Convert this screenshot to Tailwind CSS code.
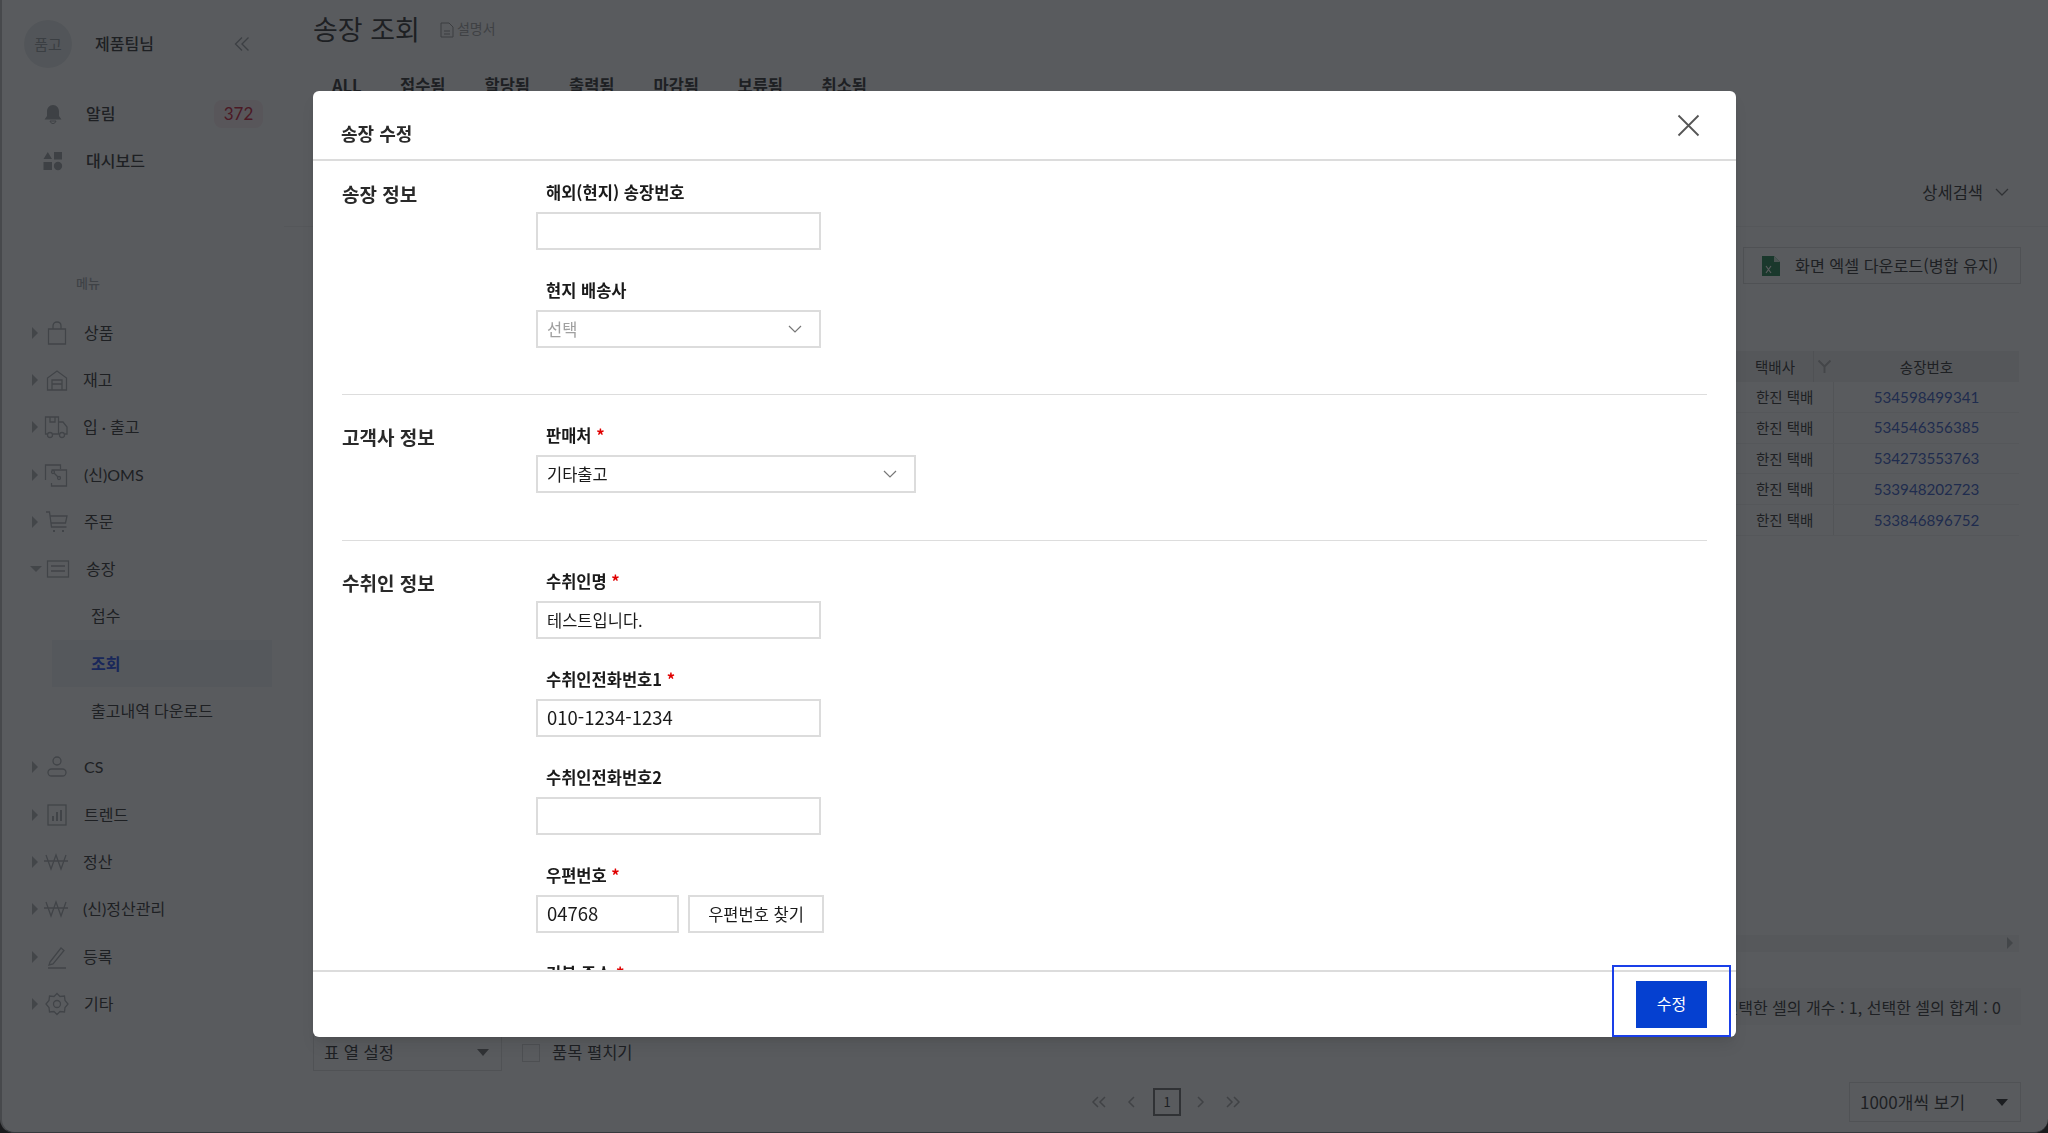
<!DOCTYPE html>
<html lang="ko">
<head>
    <meta charset="UTF-8" />
    <meta name="viewport" content="width=device-width, initial-scale=1.0" />
    <title>송장 조회</title>
    <script src="https://cdn.jsdelivr.net/npm/@tailwindcss/browser@4"></script>
</head>
<body class="h-[1133px] w-[2048px] overflow-hidden bg-[#2e2b26] font-['Noto_Sans_CJK_KR',sans-serif] text-[#3a3a3a]">
<!-- page underneath the dialog -->
<div class="flex h-[1133px] w-[2048px] overflow-hidden rounded-b-[14px] border-b border-l-2 border-b-[#8a8c90] border-l-[#c4c4c4] bg-white">
    <!-- sidebar -->
    <aside class="w-[282px] shrink-0 font-['Lato','Noto_Sans_CJK_KR',sans-serif]">
        <div class="flex h-[88px] items-center pl-[22px]">
            <div class="flex h-[48px] w-[48px] items-center justify-center rounded-full bg-[#e8eced] text-[15px] text-[#9aa0a4]">품고</div>
            <span class="ml-[23px] text-[16px] font-medium">제품팀님</span>
            <svg class="ml-[80px]" width="16" height="16" viewBox="0 0 16 16" fill="none" stroke="#a0a4a8" stroke-width="1.4"><path d="M8 1.5 1.5 8 8 14.5M14.5 1.5 8 8l6.500 6.500"/></svg>
        </div>
        <div class="mt-[2px] flex h-[47px] items-center pl-[41px]">
            <svg width="20" height="20" viewBox="0 0 20 20" fill="#a4a7aa"><path d="M10 1c3.800 0 6 3 6 6.500V12l2.500 3.500h-17L4 12V7.500C4 4 6.200 1 10 1Z"/><path d="M7 17h6c-.4 1.500-1.500 2.500-3 2.500S7.400 18.500 7 17Z" fill="none" stroke="#a4a7aa"/></svg>
            <span class="ml-[23px] w-[90px] text-[16px] font-medium">알림</span>
            <span class="ml-[38px] flex h-[28px] w-[49px] items-center justify-center rounded-[8px] bg-[#fbeef0] text-[17px] text-[#d0243f]">372</span>
        </div>
        <div class="flex h-[47px] items-center pl-[41px]">
            <svg width="20" height="20" viewBox="0 0 20 20" fill="#a4a7aa"><path d="M4.800 1 9 8H.5Z"/><rect x="11" y="1" width="8" height="7.500"/><rect x=".5" y="11" width="8.500" height="8"/><circle cx="15" cy="15" r="4.200"/></svg>
            <span class="ml-[23px] text-[16px] font-medium">대시보드</span>
        </div>
        <div class="pl-[74px] pt-[89px] text-[13px] font-medium leading-[20px] text-[#a8acb0]">메뉴</div>
        <nav class="pt-[16px] text-[16px]">
            <div class="flex h-[47.300px] items-center pl-[30px]">
                <span class="h-0 w-0 border-y-[6px] border-l-[6px] border-y-transparent border-l-[#b5b7ba]"></span>
                <svg class="ml-[7px]" width="24" height="24" viewBox="0 0 24 24" fill="none" stroke="#aeb1b4" stroke-width="1.300"><path d="M3.500 8h17v15h-17zM8 8V5c0-2.500 1.800-4 4-4s4 1.500 4 4v3"/></svg>
                <span class="ml-[15px]">상품</span>
            </div>
            <div class="flex h-[47.300px] items-center pl-[30px]">
                <span class="h-0 w-0 border-y-[6px] border-l-[6px] border-y-transparent border-l-[#b5b7ba]"></span>
                <svg class="ml-[7px]" width="24" height="24" viewBox="0 0 24 24" fill="none" stroke="#aeb1b4" stroke-width="1.300"><path d="M2.500 22V10L12 3l9.500 7v12zM7 22V12h10v10M7 16h10"/></svg>
                <span class="ml-[14px]">재고</span>
            </div>
            <div class="flex h-[47.300px] items-center pl-[30px]">
                <span class="h-0 w-0 border-y-[6px] border-l-[6px] border-y-transparent border-l-[#b5b7ba]"></span>
                <svg class="ml-[6px]" width="24" height="24" viewBox="0 0 24 24" fill="none" stroke="#aeb1b4" stroke-width="1.300"><path d="M3 19H1.500V2h13v17H9M14.500 7H19l4 5v7h-2M15 19h-1M6 2v5h5V2"/><circle cx="6" cy="20" r="2.500"/><circle cx="18" cy="20" r="2.500"/></svg>
                <span class="ml-[15px]">입 · 출고</span>
            </div>
            <div class="flex h-[47.300px] items-center pl-[30px]">
                <span class="h-0 w-0 border-y-[6px] border-l-[6px] border-y-transparent border-l-[#b5b7ba]"></span>
                <svg class="ml-[6px]" width="24" height="24" viewBox="0 0 24 24" fill="none" stroke="#aeb1b4" stroke-width="1.300"><path d="M1.500 17V2h15v4M7.500 7h15v16h-15v-3"/><circle cx="9" cy="9" r="1.500"/><circle cx="15" cy="15" r="1.500"/><path d="m10 10 4 4"/></svg>
                <span class="ml-[16px]">(신)OMS</span>
            </div>
            <div class="flex h-[47.300px] items-center pl-[30px]">
                <span class="h-0 w-0 border-y-[6px] border-l-[6px] border-y-transparent border-l-[#b5b7ba]"></span>
                <svg class="ml-[7px]" width="24" height="24" viewBox="0 0 24 24" fill="none" stroke="#aeb1b4" stroke-width="1.300"><path d="M1 2h3.500l2 15h15M5 6h17l-1.500 7H6"/><path d="M8 21h2M17 21h2" stroke-width="2"/></svg>
                <span class="ml-[15px]">주문</span>
            </div>
            <div class="flex h-[47.300px] items-center pl-[28px]">
                <span class="h-0 w-0 border-x-[6px] border-t-[6px] border-x-transparent border-t-[#b5b7ba]"></span>
                <svg class="ml-[4px]" width="24" height="24" viewBox="0 0 24 24" fill="none" stroke="#aeb1b4" stroke-width="1.300"><rect x="1.500" y="4" width="21" height="16"/><path d="M5 9h14M5 14h14"/></svg>
                <span class="ml-[16px]">송장</span>
            </div>
            <div class="flex h-[47.300px] items-center pl-[89px]">접수</div>
            <div class="ml-[50px] flex h-[47.300px] w-[220px] items-center bg-[#f1f5f8] pl-[39px] font-bold text-[#2a50f0]">조회</div>
            <div class="flex h-[47.300px] items-center pl-[89px]">출고내역 다운로드</div>
            <div class="h-[9px]"></div>
            <div class="flex h-[47.300px] items-center pl-[30px]">
                <span class="h-0 w-0 border-y-[6px] border-l-[6px] border-y-transparent border-l-[#b5b7ba]"></span>
                <svg class="ml-[7px]" width="24" height="24" viewBox="0 0 24 24" fill="none" stroke="#aeb1b4" stroke-width="1.300"><circle cx="12" cy="6" r="4"/><rect x="3" y="14" width="18" height="7" rx="3.500"/></svg>
                <span class="ml-[15px]">CS</span>
            </div>
            <div class="flex h-[47.300px] items-center pl-[30px]">
                <span class="h-0 w-0 border-y-[6px] border-l-[6px] border-y-transparent border-l-[#b5b7ba]"></span>
                <svg class="ml-[7px]" width="24" height="24" viewBox="0 0 24 24" fill="none" stroke="#aeb1b4" stroke-width="1.300"><rect x="3" y="2" width="18" height="20"/><path d="M8 18v-5M12 18V9M16 18V7" stroke-width="2"/></svg>
                <span class="ml-[15px]">트렌드</span>
            </div>
            <div class="flex h-[47.300px] items-center pl-[30px]">
                <span class="h-0 w-0 border-y-[6px] border-l-[6px] border-y-transparent border-l-[#b5b7ba]"></span>
                <svg class="ml-[6px]" width="24" height="24" viewBox="0 0 24 24" fill="none" stroke="#aeb1b4" stroke-width="1.300"><path d="m2 5 5 14 5-14 5 14 5-14M0 11h24"/></svg>
                <span class="ml-[15px]">정산</span>
            </div>
            <div class="flex h-[47.300px] items-center pl-[30px]">
                <span class="h-0 w-0 border-y-[6px] border-l-[6px] border-y-transparent border-l-[#b5b7ba]"></span>
                <svg class="ml-[6px]" width="24" height="24" viewBox="0 0 24 24" fill="none" stroke="#aeb1b4" stroke-width="1.300"><path d="m2 5 5 14 5-14 5 14 5-14M0 11h24"/></svg>
                <span class="ml-[15px]">(신)정산관리</span>
            </div>
            <div class="flex h-[47.300px] items-center pl-[30px]">
                <span class="h-0 w-0 border-y-[6px] border-l-[6px] border-y-transparent border-l-[#b5b7ba]"></span>
                <svg class="ml-[7px]" width="24" height="24" viewBox="0 0 24 24" fill="none" stroke="#aeb1b4" stroke-width="1.300"><path d="M5 17 16 3l3 2.500L8 19l-4 1ZM3 23h18"/></svg>
                <span class="ml-[14px]">등록</span>
            </div>
            <div class="flex h-[47.300px] items-center pl-[30px]">
                <span class="h-0 w-0 border-y-[6px] border-l-[6px] border-y-transparent border-l-[#b5b7ba]"></span>
                <svg class="ml-[7px]" width="24" height="24" viewBox="0 0 24 24" fill="none" stroke="#aeb1b4" stroke-width="1.300"><path d="m12 1.500 3 3 4.500-.5.500 4.500 3 3.500-3 3.500-.5 4.500-4.500-.5-3 3-3-3-4.500.5-.5-4.500-3-3.500 3-3.500.5-4.500 4.500.5Z"/><circle cx="12" cy="12" r="3.500"/></svg>
                <span class="ml-[15px]">기타</span>
            </div>
        </nav>
    </aside>

    <!-- main column -->
    <main class="flex min-w-0 flex-1 flex-col">
        <div class="h-[227px] border-b border-[#f0f0f0] pl-[29px]">
            <div class="flex h-[56px] items-center">
                <h1 class="text-[27px] font-normal leading-none">송장 조회</h1>
                <svg class="ml-[20px] mt-[3px]" width="14" height="16" viewBox="0 0 14 16" fill="none" stroke="#9a9a9a"><path d="M1 1h8l4 4v10H1zM4 9h6M4 12h6"/></svg>
                <span class="ml-[3px] text-[14px] text-[#a8a8a8]">설명서</span>
            </div>
            <div class="flex h-[57px] items-center pl-[19px] pt-[2px] text-[16.500px] font-bold">
                <span class="w-[68px]">ALL</span><span class="w-[84.500px]">접수됨</span><span class="w-[84.500px]">할당됨</span><span class="w-[84.500px]">출력됨</span><span class="w-[84px]">마감됨</span><span class="w-[84px]">보류됨</span><span>취소됨</span>
            </div>
            <div class="mt-[54px] flex h-[50px] items-center justify-end pr-[39px]">
                <span class="text-[16.500px]">상세검색</span>
                <svg class="ml-[12px]" width="14" height="9" viewBox="0 0 14 9" fill="none" stroke="#777" stroke-width="1.300"><path d="m1 1 6 6 6-6"/></svg>
            </div>
        </div>
        <div class="flex h-[124px] justify-end pr-[27px] pt-[20px]">
            <div class="flex h-[37px] w-[278px] items-center border border-[#dcdcdc] pl-[18px]">
                <svg width="18" height="20" viewBox="0 0 18 20"><path d="M0 0h12l6 6v14H0z" fill="#2e8b57"/><path d="M12 0v6h6z" fill="#cfe8da"/><path d="m4 10 5 7M9 10l-5 7" stroke="#fff" stroke-width="1.200"/></svg>
                <span class="ml-[15px] text-[16.200px]">화면 엑셀 다운로드(병합 유지)</span>
            </div>
        </div>
        <!-- table, the left columns sit behind the dialog -->
        <div class="ml-[29px] h-[601px] shrink-0 pr-[29px] text-[14.500px]">
            <div class="flex h-[31px] items-center bg-[#f2f2f2]">
                <div class="flex-1"></div>
                <div class="flex h-full w-[78px] items-center pl-[20px]">택배사</div>
                <div class="flex h-full w-[21px] items-center justify-center border-l border-[#dedede]">
                    <svg width="13" height="13" viewBox="0 0 13 13" fill="none" stroke="#b8b8b8" stroke-width="2"><path d="m.5.500 6 6 6-6M6.500 6v7"/></svg>
                </div>
                <div class="w-[185px] text-center">송장번호</div>
            </div>
            <div class="flex h-[30.800px] items-center border-b border-[#f0f0f0]"><div class="flex-1"></div><div class="flex h-full w-[99px] items-center border-r border-[#e8e8e8] pl-[21px]">한진 택배</div><div class="w-[185px] text-center font-['Lato',sans-serif] text-[15.200px] text-[#3f63c8]">534598499341</div></div>
            <div class="flex h-[30.800px] items-center border-b border-[#f0f0f0]"><div class="flex-1"></div><div class="flex h-full w-[99px] items-center border-r border-[#e8e8e8] pl-[21px]">한진 택배</div><div class="w-[185px] text-center font-['Lato',sans-serif] text-[15.200px] text-[#3f63c8]">534546356385</div></div>
            <div class="flex h-[30.800px] items-center border-b border-[#f0f0f0]"><div class="flex-1"></div><div class="flex h-full w-[99px] items-center border-r border-[#e8e8e8] pl-[21px]">한진 택배</div><div class="w-[185px] text-center font-['Lato',sans-serif] text-[15.200px] text-[#3f63c8]">534273553763</div></div>
            <div class="flex h-[30.800px] items-center border-b border-[#f0f0f0]"><div class="flex-1"></div><div class="flex h-full w-[99px] items-center border-r border-[#e8e8e8] pl-[21px]">한진 택배</div><div class="w-[185px] text-center font-['Lato',sans-serif] text-[15.200px] text-[#3f63c8]">533948202723</div></div>
            <div class="flex h-[30.800px] items-center border-b border-[#f0f0f0]"><div class="flex-1"></div><div class="flex h-full w-[99px] items-center border-r border-[#e8e8e8] pl-[21px]">한진 택배</div><div class="w-[185px] text-center font-['Lato',sans-serif] text-[15.200px] text-[#3f63c8]">533846896752</div></div>
            <div class="h-[399px]"></div>
            <div class="flex h-[17px] items-center justify-end bg-[#f6f6f6] pr-[6px]">
                <span class="h-0 w-0 border-y-[6px] border-l-[6px] border-y-transparent border-l-[#b5b7ba]"></span>
            </div>
        </div>
        <div class="ml-[29px] mr-[27px] mt-[36px] flex h-[37px] shrink-0 items-center justify-end bg-[#f7f7f7] pr-[20px] text-[16px]">선택한 셀의 개수 : 1, 선택한 셀의 합계 : 0</div>
        <div class="mt-[9px] flex h-[37px] shrink-0 items-center pl-[29px]">
            <div class="flex h-[37px] w-[189px] items-center justify-between border border-[#e2e2e2] pl-[10px] pr-[12px] text-[16.500px]">표 열 설정<span class="h-0 w-0 border-x-[6px] border-t-[7px] border-x-transparent border-t-[#777]"></span></div>
            <span class="ml-[20px] h-[18px] w-[18px] border border-[#d8d8d8]"></span>
            <span class="ml-[12px] text-[16.500px]">품목 펼치기</span>
        </div>
        <div class="relative mt-[11px] flex h-[40px] shrink-0 items-center justify-center">
            <svg width="16" height="12" viewBox="0 0 16 12" fill="none" stroke="#aaa" stroke-width="1.500"><path d="M7 1 2 6l5 5M14 1 9 6l5 5"/></svg>
            <svg class="ml-[20px]" width="9" height="12" viewBox="0 0 9 12" fill="none" stroke="#aaa" stroke-width="1.500"><path d="M7 1 2 6l5 5"/></svg>
            <div class="ml-[17px] flex h-[28px] w-[28px] items-center justify-center border-2 border-[#777] text-[13px]">1</div>
            <svg class="ml-[15px]" width="9" height="12" viewBox="0 0 9 12" fill="none" stroke="#aaa" stroke-width="1.500"><path d="m2 1 5 5-5 5"/></svg>
            <svg class="ml-[20px]" width="16" height="12" viewBox="0 0 16 12" fill="none" stroke="#aaa" stroke-width="1.500"><path d="m2 1 5 5-5 5M9 1l5 5-5 5"/></svg>
            <div class="absolute right-[27px] top-0 flex h-[40px] w-[172px] items-center justify-between border border-[#e2e2e2] pl-[10px] pr-[12px] text-[17px]">1000개씩 보기<span class="h-0 w-0 border-x-[6px] border-t-[7px] border-x-transparent border-t-[#333]"></span></div>
        </div>
    </main>
</div>

<!-- dim layer -->
<div class="fixed inset-0 bg-[#12151a]/70"></div>

<!-- edit dialog -->
<div class="fixed left-[313px] top-[91px] flex h-[946px] w-[1423px] flex-col rounded-[6px] bg-white text-[#1a1a1a] shadow-lg">
    <header class="flex h-[70px] shrink-0 items-center justify-between border-b-2 border-[#dcdcdc] pl-[28px] pr-[36px] pt-[9px]">
        <h2 class="mt-[7px] text-[18px] font-bold text-[#2a2a2a]">송장 수정</h2>
        <svg class="mb-[8px]" width="23" height="23" viewBox="0 0 23 23" fill="none" stroke="#555" stroke-width="1.800"><path d="m1.500 1.500 20 20M21.500 1.500l-20 20"/></svg>
    </header>

    <div class="min-h-0 flex-1 overflow-hidden px-[29px] text-[16.500px]">
        <!-- 송장 정보 -->
        <section class="flex border-b border-[#dddddd] pb-[46px] pt-[19px]">
            <h3 class="w-[194px] shrink-0 text-[19px] font-bold leading-[28px] text-[#2a2a2a]">송장 정보</h3>
            <div class="flex flex-col gap-[28px]">
                <div>
                    <div class="mb-[8px] h-[24px] pl-[10px] font-bold leading-[24px]">해외(현지) 송장번호</div>
                    <div class="h-[38px] w-[285px] border-2 border-[#dcdcdc]"></div>
                </div>
                <div>
                    <div class="mb-[8px] h-[24px] pl-[10px] font-bold leading-[24px]">현지 배송사</div>
                    <div class="flex h-[38px] w-[285px] items-center justify-between border-2 border-[#dcdcdc] pl-[9px] pr-[17px] text-[#a0a0a0]">선택
                        <svg width="14" height="9" viewBox="0 0 14 9" fill="none" stroke="#777" stroke-width="1.200"><path d="m1 1 6 6 6-6"/></svg>
                    </div>
                </div>
            </div>
        </section>
        <!-- 고객사 정보 -->
        <section class="flex border-b border-[#dddddd] pb-[47px] pt-[28px]">
            <h3 class="w-[194px] shrink-0 text-[19px] font-bold leading-[28px] text-[#2a2a2a]">고객사 정보</h3>
            <div>
                <div class="mb-[8px] h-[24px] pl-[10px] font-bold leading-[24px]">판매처 <span class="text-[#e00000]">*</span></div>
                <div class="flex h-[38px] w-[380px] items-center justify-between border-2 border-[#dcdcdc] pl-[9px] pr-[17px]">기타출고
                    <svg width="14" height="9" viewBox="0 0 14 9" fill="none" stroke="#777" stroke-width="1.200"><path d="m1 1 6 6 6-6"/></svg>
                </div>
            </div>
        </section>
        <!-- 수취인 정보 -->
        <section class="flex pt-[28px]">
            <h3 class="w-[194px] shrink-0 text-[19px] font-bold leading-[28px] text-[#2a2a2a]">수취인 정보</h3>
            <div class="flex flex-col gap-[28px]">
                <div>
                    <div class="mb-[8px] h-[24px] pl-[10px] font-bold leading-[24px]">수취인명 <span class="text-[#e00000]">*</span></div>
                    <div class="flex h-[38px] w-[285px] items-center border-2 border-[#dcdcdc] pl-[9px]">테스트입니다.</div>
                </div>
                <div>
                    <div class="mb-[8px] h-[24px] pl-[10px] font-bold leading-[24px]">수취인전화번호1 <span class="text-[#e00000]">*</span></div>
                    <div class="flex h-[38px] w-[285px] items-center border-2 border-[#dcdcdc] pl-[9px] text-[18.500px]">010-1234-1234</div>
                </div>
                <div>
                    <div class="mb-[8px] h-[24px] pl-[10px] font-bold leading-[24px]">수취인전화번호2</div>
                    <div class="h-[38px] w-[285px] border-2 border-[#dcdcdc]"></div>
                </div>
                <div>
                    <div class="mb-[8px] h-[24px] pl-[10px] font-bold leading-[24px]">우편번호 <span class="text-[#e00000]">*</span></div>
                    <div class="flex gap-[9px]">
                        <div class="flex h-[38px] w-[143px] items-center border-2 border-[#dcdcdc] pl-[9px] text-[18.500px]">04768</div>
                        <div class="flex h-[38px] w-[136px] items-center justify-center border-2 border-[#dcdcdc]">우편번호 찾기</div>
                    </div>
                </div>
                <div>
                    <div class="mb-[8px] h-[24px] pl-[10px] font-bold leading-[24px]">기본 주소 <span class="text-[#e00000]">*</span></div>
                </div>
            </div>
        </section>
    </div>

    <footer class="relative flex h-[67px] shrink-0 items-start justify-end border-t-2 border-[#dcdcdc] pr-[29px] pt-[9px]">
        <button class="h-[47px] w-[71px] bg-[#0540d0] pb-[3px] text-[16px] text-white">수정</button>
        <div class="absolute bottom-0 right-[5px] h-[72px] w-[119px] border-2 border-[#1a3fe8]"></div>
    </footer>
</div>
</body>
</html>
